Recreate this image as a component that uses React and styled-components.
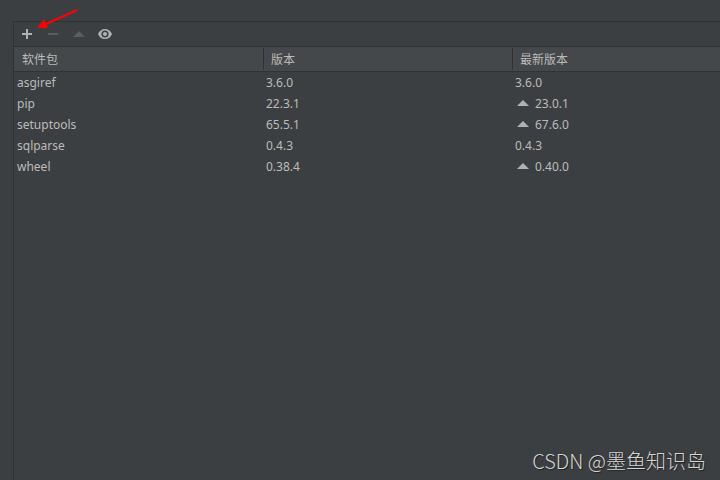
import { useState } from 'react';
import styled, { createGlobalStyle } from 'styled-components';

const columns = ['软件包', '版本', '最新版本'];

const packages = [
  { name: 'asgiref', version: '3.6.0', latest: '3.6.0' },
  { name: 'pip', version: '22.3.1', latest: '23.0.1' },
  { name: 'setuptools', version: '65.5.1', latest: '67.6.0' },
  { name: 'sqlparse', version: '0.4.3', latest: '0.4.3' },
  { name: 'wheel', version: '0.38.4', latest: '0.40.0' },
];

function App() {
  const [selected, setSelected] = useState(null);

  return (
    <Page>
      <GlobalStyle />
      <Panel>
        <Toolbar>
          <ToolButton aria-label="安装">
            <svg width="16" height="16" viewBox="0 0 16 16">
              <path d="M7 3h2v4h4v2H9v4H7V9H3V7h4z" fill="#afb1b3" />
            </svg>
          </ToolButton>
          <ToolButton aria-label="卸载" disabled={selected === null}>
            <svg width="16" height="16" viewBox="0 0 16 16">
              <path d="M3 7h10v2H3z" fill="#5c5c5c" />
            </svg>
          </ToolButton>
          <ToolButton aria-label="升级" disabled={selected === null}>
            <svg width="16" height="16" viewBox="0 0 16 16">
              <path d="M8 5l6 6H2z" fill="#5c5c5c" />
            </svg>
          </ToolButton>
          <ToolButton aria-label="显示早期版本">
            <svg width="16" height="16" viewBox="0 0 16 16">
              <path
                fillRule="evenodd"
                d="M8 3C4.800 3 2.100 5 1 8c1.100 3 3.800 5 7 5s5.900-2 7-5c-1.100-3-3.800-5-7-5zm0 8.600a3.600 3.600 0 1 1 0-7.200 3.600 3.600 0 0 1 0 7.200z"
                fill="#afb1b3"
              />
              <circle cx="8" cy="8" r="2.100" fill="#afb1b3" />
            </svg>
          </ToolButton>
        </Toolbar>
        <PackageTable>
          <colgroup>
            <Column />
            <Column />
            <col />
          </colgroup>
          <thead>
            <tr>
              {columns.map((column, index) => (
                <HeaderCell key={column} scope="col">
                  <HeaderLabel $divided={index > 0}>{column}</HeaderLabel>
                </HeaderCell>
              ))}
            </tr>
          </thead>
          <tbody>
            {packages.map((item) => (
              <Row
                key={item.name}
                $selected={selected === item.name}
                onClick={() => setSelected(item.name)}
              >
                <Cell>{item.name}</Cell>
                <Cell>{item.version}</Cell>
                <Cell>
                  <Latest>
                    {item.latest !== item.version && (
                      <svg width="16" height="16" viewBox="0 0 16 16">
                        <path d="M8 4l6 6H2z" fill="#afb1b3" />
                      </svg>
                    )}
                    {item.latest}
                  </Latest>
                </Cell>
              </Row>
            ))}
          </tbody>
        </PackageTable>
      </Panel>
      <Pointer width="44" height="24" viewBox="0 0 44 24" aria-hidden="true">
        <path d="M41 2L10 16" stroke="#ff0000" strokeWidth="2" fill="none" />
        <path d="M1 20L8 11L10 16L12 20z" fill="#ff0000" />
      </Pointer>
      <Watermark>CSDN @墨鱼知识岛</Watermark>
    </Page>
  );
}

const GlobalStyle = createGlobalStyle`
  * {
    box-sizing: border-box;
  }

  body {
    margin: 0;
    background-color: #3c3f41;
    color: #bbbbbb;
    font-family: 'Noto Sans', 'Noto Sans CJK SC', sans-serif;
    font-size: 12px;
  }
`;

const Page = styled.main`
  position: relative;
  display: flex;
  min-height: 100vh;
  padding: 21px 0 0 13px;
`;

const Panel = styled.section`
  flex: 1;
  min-width: 0;
  border-top: 1px solid #323232;
  border-left: 1px solid #323232;
`;

const Toolbar = styled.div`
  display: flex;
  align-items: center;
  gap: 10px;
  height: 24px;
  padding: 0 5px;
`;

const ToolButton = styled.button`
  display: flex;
  padding: 0;
  border: none;
  background: none;
`;

const PackageTable = styled.table`
  width: 100%;
  table-layout: fixed;
  border-spacing: 0;
`;

const Column = styled.col`
  width: 249px;
`;

const HeaderCell = styled.th`
  height: 26px;
  padding: 0;
  border-top: 1px solid #323232;
  border-bottom: 1px solid #323232;
  background-color: #45484a;
  font-weight: normal;
  text-align: left;
`;

const HeaderLabel = styled.div`
  padding: 1px 7px 0;
  border-left: 1px solid ${(props) => (props.$divided ? '#323232' : 'transparent')};
  line-height: 21px;
`;

const Row = styled.tr`
  background-color: ${(props) => (props.$selected ? '#4b6eaf' : 'transparent')};
`;

const Cell = styled.td`
  height: 21px;
  padding: 0 3px;
  line-height: 20px;
`;

const Latest = styled.span`
  display: flex;
  align-items: center;
  gap: 4px;
`;

const Pointer = styled.svg`
  position: absolute;
  top: 8px;
  left: 36px;
  pointer-events: none;
`;

const Watermark = styled.div`
  position: absolute;
  right: 14px;
  bottom: 5px;
  color: #d4d4d4;
  font-family: 'Noto Sans CJK SC', sans-serif;
  font-size: 20px;
  font-weight: 300;
  line-height: 28px;
  text-shadow: 1px 1px 1px #222222;
`;

export default App;
